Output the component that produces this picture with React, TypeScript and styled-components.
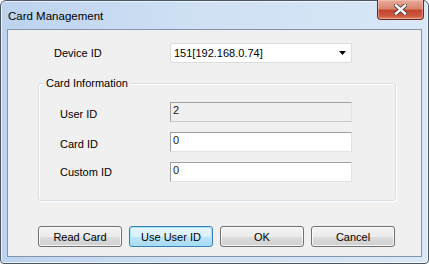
import React from 'react';
import styled, { createGlobalStyle } from 'styled-components';

const GlobalStyle = createGlobalStyle`
  html, body {
    margin: 0;
    padding: 0;
    background: #ffffff;
  }
  * {
    box-sizing: border-box;
  }
`;

const Window = styled.div`
  width: 429px;
  height: 264px;
  display: flex;
  flex-direction: column;
  padding: 0 6px 6px;
  border: 1px solid #4a5566;
  border-radius: 6px 6px 4px 4px;
  background: linear-gradient(90deg, #bcd3ee 0%, #cfe0f4 45%, #d9e7f6 100%);
  box-shadow: inset 0 0 0 1px rgba(255, 255, 255, 0.7);
  font-family: 'Liberation Sans', Arial, sans-serif;
  font-size: 11px;
  color: #000;
`;

const TitleBar = styled.div`
  height: 28px;
  margin: 0 -6px;
  display: flex;
  align-items: center;
  justify-content: space-between;
`;

const Title = styled.span`
  padding-left: 7px;
  padding-top: 1px;
  font-size: 11.5px;
  color: #000;
`;

const CloseButton = styled.div`
  align-self: flex-start;
  width: 47px;
  height: 20px;
  margin-top: -1px;
  margin-right: 4px;
  display: flex;
  align-items: center;
  justify-content: center;
  border: 1px solid #6b2a1f;
  border-top: none;
  border-radius: 0 0 4px 4px;
  background: linear-gradient(180deg, #e9a99a 0%, #d98670 45%, #c4452f 55%, #cc5a40 85%, #e08a6e 100%);
  box-shadow: inset 0 0 0 1px rgba(255, 210, 200, 0.45);
`;

const Client = styled.div`
  flex: 1;
  display: flex;
  flex-direction: column;
  align-items: flex-start;
  padding: 13px 0 0 30px;
  border: 1px solid #8394aa;
  background: #f0f0f0;
`;

const DeviceRow = styled.div`
  display: flex;
  align-items: center;
  padding-left: 16px;
  height: 20px;
`;

const Label = styled.span<{ $width: number; $shift?: number }>`
  width: ${p => p.$width}px;
  padding-top: ${p => p.$shift ?? 0}px;
  white-space: nowrap;
`;

const Combo = styled.div`
  width: 182px;
  height: 20px;
  display: flex;
  align-items: center;
  justify-content: space-between;
  padding: 0 5px 0 3px;
  background: #fff;
  border: 1px solid #dcdcdc;
  border-radius: 2px;
`;

const GroupBox = styled.div`
  position: relative;
  width: 358px;
  height: 118px;
  margin-top: 20px;
  padding: 18px 0 0 21px;
  border: 1px solid #d5dfe5;
  border-radius: 3px;
  box-shadow: inset 1px 1px 0 #fff, 1px 1px 0 #fff;
  display: flex;
  flex-direction: column;
  gap: 10px;
`;

const Legend = styled.span`
  position: absolute;
  top: -7px;
  left: 5px;
  padding: 0 2px;
  background: #f0f0f0;
  line-height: 13px;
`;

const FieldRow = styled.div`
  display: flex;
  align-items: center;
  height: 20px;
`;

const Field = styled.div<{ $disabled?: boolean }>`
  width: 182px;
  height: 20px;
  padding: 1px 2px;
  line-height: 13px;
  border: 1px solid;
  border-color: #a0a0a0 #e3e3e3 ${p => (p.$disabled ? '#c8c8c8' : '#e3e3e3')} #a0a0a0;
  background: ${p => (p.$disabled ? '#f0f0f0' : '#fff')};
  color: #1a1a1a;
`;

const ButtonBar = styled.div`
  display: flex;
  gap: 7px;
  margin-top: 25px;
`;

const Button = styled.button<{ $focused?: boolean }>`
  width: 84px;
  height: 21px;
  padding: 0;
  font-family: inherit;
  font-size: 11px;
  color: #000;
  border: 1px solid ${p => (p.$focused ? '#3c7fb1' : '#707070')};
  border-radius: 3px;
  background: ${p =>
    p.$focused
      ? 'linear-gradient(180deg, #eaf6fd 0%, #d9f0fc 50%, #bee6fd 50%, #a7d9f5 100%)'
      : 'linear-gradient(180deg, #f2f2f2 0%, #ebebeb 50%, #dddddd 50%, #cfcfcf 100%)'};
  box-shadow: inset 0 0 0 1px ${p => (p.$focused ? '#9fe4f7' : 'rgba(255,255,255,0.8)')};
`;

const CloseGlyph = () => (
  <svg width="13" height="11" viewBox="0 0 13 11">
    <path d="M2 1.5 L11 9.5 M11 1.5 L2 9.5" stroke="#4a3a36" strokeWidth="4.2" strokeLinecap="square" />
    <path d="M2 1.5 L11 9.5 M11 1.5 L2 9.5" stroke="#fff" strokeWidth="2.4" strokeLinecap="square" />
  </svg>
);

const DropArrow = () => (
  <svg width="7" height="4" viewBox="0 0 7 4">
    <polygon points="0,0 7,0 3.5,4" fill="#000" />
  </svg>
);

const App: React.FC = () => {
  return (
    <>
      <GlobalStyle />
      <Window>
        <TitleBar>
          <Title>Card Management</Title>
          <CloseButton>
            <CloseGlyph />
          </CloseButton>
        </TitleBar>
        <Client>
          <DeviceRow>
            <Label $width={116}>Device ID</Label>
            <Combo>
              <span>151[192.168.0.74]</span>
              <DropArrow />
            </Combo>
          </DeviceRow>
          <GroupBox>
            <Legend>Card Information</Legend>
            <FieldRow>
              <Label $width={110} $shift={4}>User ID</Label>
              <Field $disabled>2</Field>
            </FieldRow>
            <FieldRow>
              <Label $width={110} $shift={4}>Card ID</Label>
              <Field>0</Field>
            </FieldRow>
            <FieldRow>
              <Label $width={110}>Custom ID</Label>
              <Field>0</Field>
            </FieldRow>
          </GroupBox>
          <ButtonBar>
            <Button>Read Card</Button>
            <Button $focused>Use User ID</Button>
            <Button>OK</Button>
            <Button>Cancel</Button>
          </ButtonBar>
        </Client>
      </Window>
    </>
  );
};

export default App;
